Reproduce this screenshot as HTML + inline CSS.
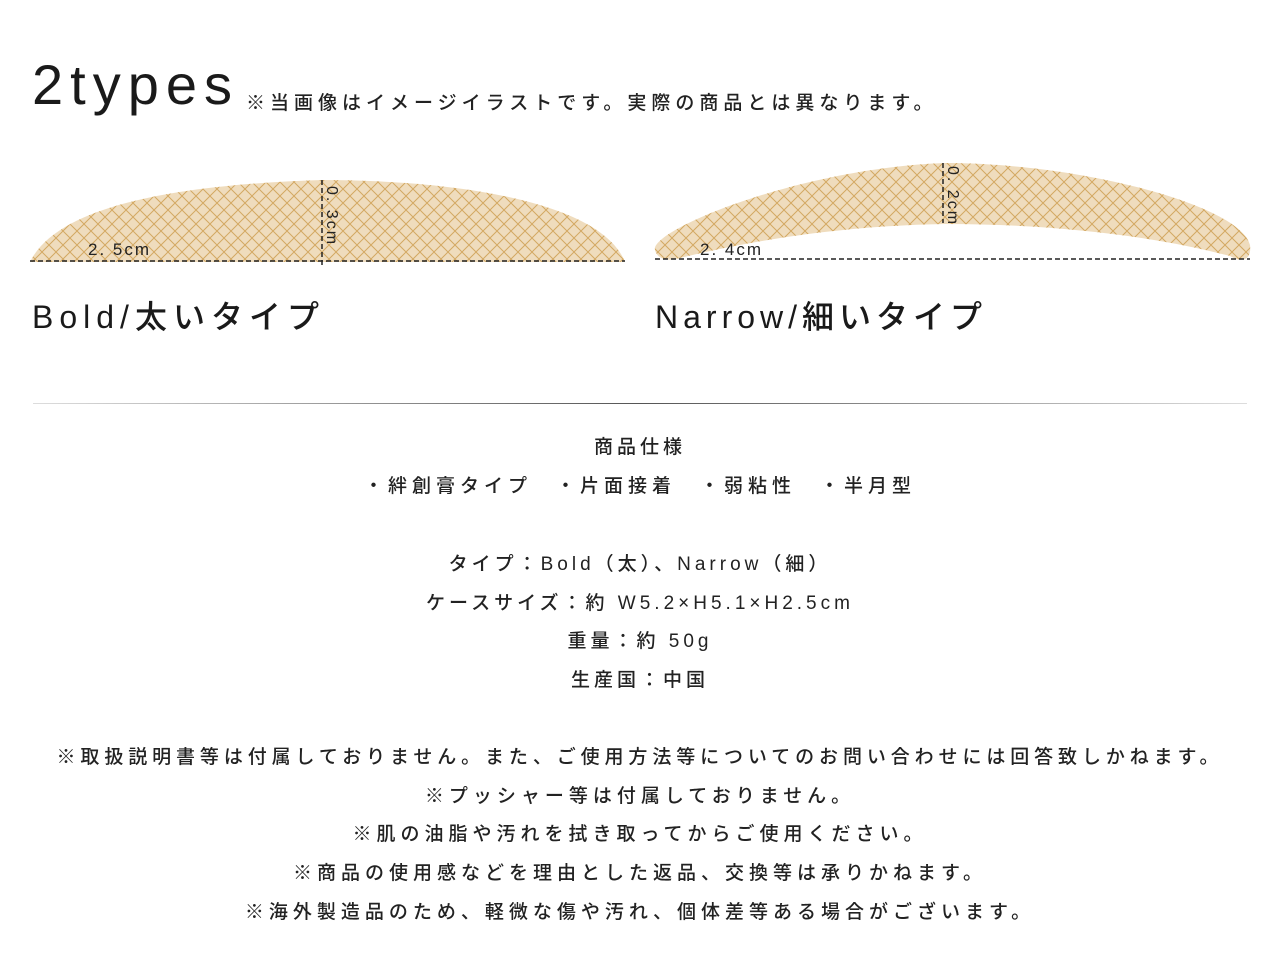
<!DOCTYPE html>
<html><head><meta charset="utf-8">
<style>
body{margin:0;width:1280px;height:973px;background:#fff;position:relative;overflow:hidden;font-family:"Liberation Sans","Noto Sans CJK JP",sans-serif;color:#1a1a1a}
.a{position:absolute;white-space:nowrap}
.c{position:absolute;left:0;width:1280px;text-align:center;white-space:nowrap;font-size:19px;letter-spacing:4px;color:#222;font-weight:500}
</style></head><body>
<div class="a" style="left:32px;top:52px;font-size:56px;letter-spacing:7px;font-weight:400">2types</div>
<div class="a" style="left:246px;top:88px;font-size:19px;letter-spacing:5px;color:#222;font-weight:500">※当画像はイメージイラストです。実際の商品とは異なります。</div>
<svg class="a" style="left:0;top:0" width="1280" height="300">
<defs>
<pattern id="p" width="14" height="14" patternUnits="userSpaceOnUse">
<rect width="14" height="14" fill="#efdcbd"/>
<path d="M0 0L14 14M14 0L0 14" stroke="#d3a862" stroke-width="1"/>
</pattern>
</defs>
<path d="M30 262 C60 200,200 184,322 180 C450 180,600 200,625 262 Z" fill="url(#p)"/>
<path d="M655 250 C650 230,800 168,945 163 C1080 163,1240 205,1250 245 C1252 262,1240 262,1230 256 C1150 235,1050 224,945 224 C820 226,720 248,680 258 C665 262,657 258,655 250 Z" fill="url(#p)"/>
<line x1="30" y1="261" x2="625" y2="261" stroke="#222" stroke-width="1.5" stroke-dasharray="5 3"/>
<line x1="322" y1="180" x2="322" y2="265" stroke="#222" stroke-width="1.5" stroke-dasharray="5 3"/>
<line x1="655" y1="259" x2="1250" y2="259" stroke="#222" stroke-width="1.5" stroke-dasharray="5 3"/>
<line x1="943" y1="163" x2="943" y2="223" stroke="#222" stroke-width="1.5" stroke-dasharray="5 3"/>
<text x="88" y="255" font-size="17" fill="#222" letter-spacing="2">2. 5cm</text>
<text x="700" y="255" font-size="17" fill="#222" letter-spacing="2">2. 4cm</text>
<text transform="translate(327,186) rotate(90)" font-size="16" fill="#222" letter-spacing="2">0. 3cm</text>
<text transform="translate(948,166) rotate(90)" font-size="16" fill="#222" letter-spacing="2">0. 2cm</text>
</svg>
<div class="a" style="left:32px;top:292px;font-size:32px;letter-spacing:6px;font-weight:500">Bold/太いタイプ</div>
<div class="a" style="left:655px;top:292px;font-size:32px;letter-spacing:5px;font-weight:500">Narrow/細いタイプ</div>
<div class="a" style="left:33px;top:403px;width:1214px;height:1px;background:linear-gradient(90deg,#ddd,#555 50%,#ddd)"></div>
<div class="c" style="top:432px">商品仕様</div>
<div class="c" style="top:471px;letter-spacing:5px">・絆創膏タイプ　・片面接着　・弱粘性　・半月型</div>
<div class="c" style="top:549px">タイプ：Bold（太）、Narrow（細）</div>
<div class="c" style="top:588px">ケースサイズ：約 W5.2×H5.1×H2.5cm</div>
<div class="c" style="top:626px">重量：約 50g</div>
<div class="c" style="top:665px">生産国：中国</div>
<div class="c" style="top:742px;letter-spacing:4.9px">※取扱説明書等は付属しておりません。また、ご使用方法等についてのお問い合わせには回答致しかねます。</div>
<div class="c" style="top:781px;letter-spacing:5px">※プッシャー等は付属しておりません。</div>
<div class="c" style="top:819px;letter-spacing:5px">※肌の油脂や汚れを拭き取ってからご使用ください。</div>
<div class="c" style="top:858px;letter-spacing:5px">※商品の使用感などを理由とした返品、交換等は承りかねます。</div>
<div class="c" style="top:897px;letter-spacing:5px">※海外製造品のため、軽微な傷や汚れ、個体差等ある場合がございます。</div>
</body></html>
